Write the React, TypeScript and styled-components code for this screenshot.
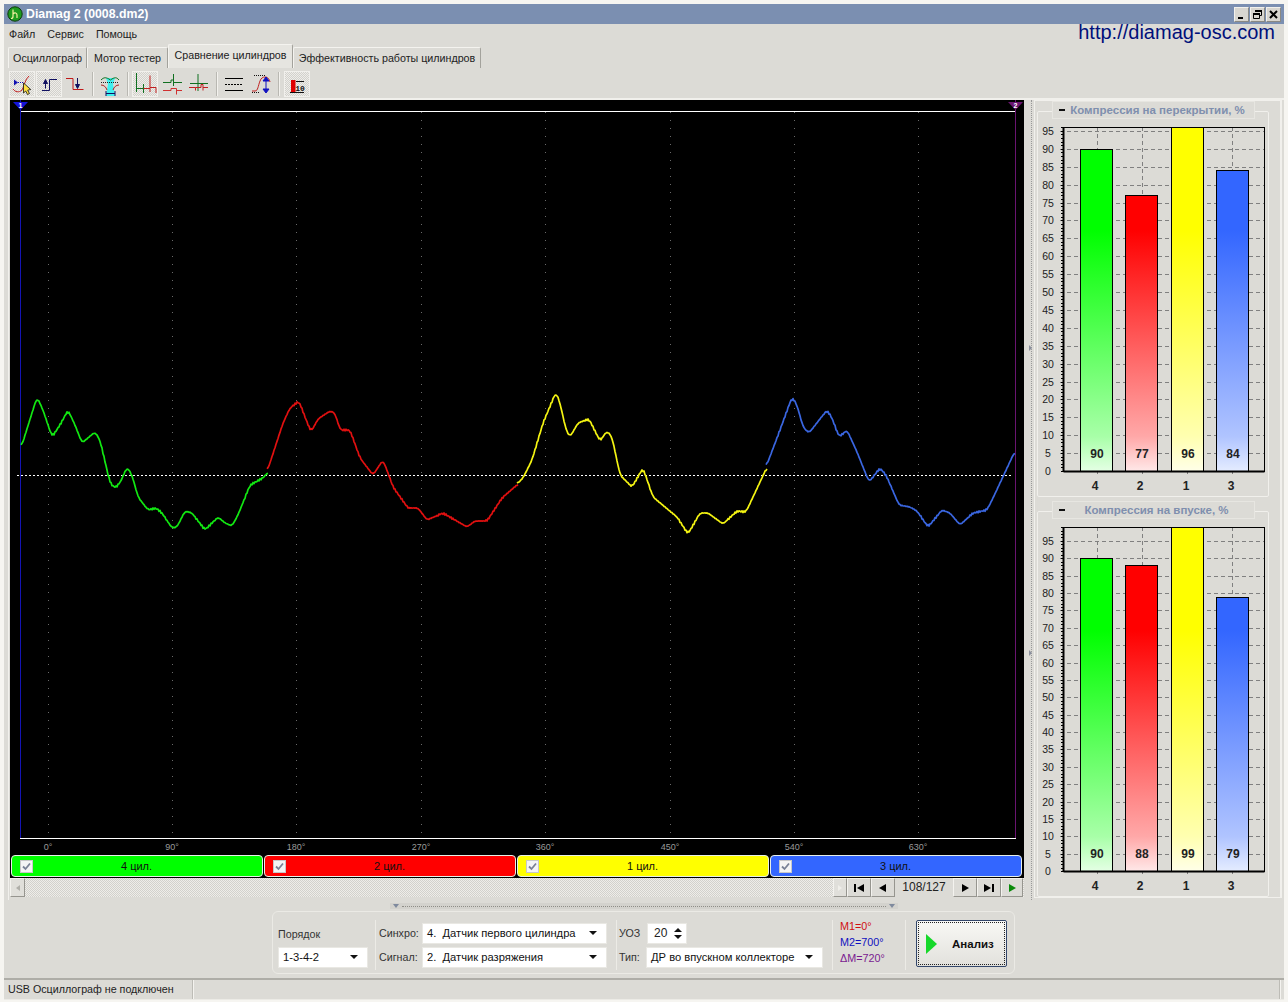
import React from "react";
import styled, { createGlobalStyle } from "styled-components";

const UI = `"Liberation Sans", Arial, sans-serif`;
const BG = "#dcdbd6";
const HATCH = `conic-gradient(#eeede9 25%, #d2d1cc 0 50%, #eeede9 0 75%, #d2d1cc 0)`;

const Global = createGlobalStyle`
  html, body { margin: 0; padding: 0; background: #f6f5f1; }
  * { box-sizing: border-box; }
`;

const Page = styled.div`
  width: 1288px; height: 1002px; padding: 4px 4px 2px 4px; overflow: hidden;
  font: 11px/13px ${UI}; color: #222;
`;
const Win = styled.div`
  height: 996px; background: ${BG}; display: flex; flex-direction: column;
`;
const TitleBar = styled.div`
  height: 20px; flex: none; background: #7b8fb1; display: flex; align-items: center; padding: 0 3px 0 3px;
  color: #fff; font: bold 12.3px ${UI};
`;
const TitleText = styled.span` flex: 1; margin-left: 3px; `;
const WinBtn = styled.span`
  width: 15px; height: 15px; margin-left: 1px; background: #d8d6d0; display: flex; align-items: center; justify-content: center;
  border: 1px solid; border-color: #f2f1ec #8a8983 #8a8983 #f2f1ec;
`;
const MenuBar = styled.div`
  height: 20px; flex: none; display: flex; align-items: center; padding: 0 9px 0 5px; gap: 12px; font-size: 10.7px;
`;
const Url = styled.span`
  margin-left: auto; color: #00107a; font: 20px/20px ${UI}; position: relative; top: -2px;
`;
const TabStrip = styled.div`
  height: 24px; flex: none; display: flex; align-items: flex-end; padding-left: 4px;
`;
const Tab = styled.div<{ $w: number; $on?: boolean }>`
  width: ${(p) => p.$w}px; height: ${(p) => (p.$on ? 24 : 21)}px; padding-bottom: ${(p) => (p.$on ? 3 : 0)}px;
  display: flex; align-items: center; justify-content: center; font-size: 10.7px; white-space: nowrap;
  background: ${(p) => (p.$on ? "#e6e5e0" : BG)};
  border: 1px solid #f4f3ef; border-right-color: #a3a29c; border-bottom: 0; border-radius: 2px 2px 0 0;
`;
const ToolBar = styled.div`
  height: 30px; flex: none; display: flex; align-items: center; padding: 1px 0 0 5px; gap: 0.5px;
`;
const ToolBtn = styled.div<{ $on?: boolean }>`
  width: 26px; height: 26px; flex: none; display: flex; align-items: center; justify-content: center;
  ${(p) => p.$on && `background-image: ${HATCH}; background-size: 2px 2px; border: 1px solid #f1f0ec;`}
`;
const ToolSep = styled.div<{ $m: number }>`
  width: 1px; height: 24px; background: #b9b8b2; margin: 0 ${(p) => p.$m}px; flex: none; box-shadow: 1px 0 #f3f2ee;
`;
const Main = styled.div`
  height: 802px; flex: none; margin-left: 4px; display: flex; padding: 0 0 0 1px;
  border-top: 2px solid #f1f0ec; border-left: 1px solid #f1f0ec;
`;
const LeftCol = styled.div` width: 1014px; flex: none; display: flex; flex-direction: column; `;
const Scope = styled.div`
  width: 1014px; height: 778px; background: #000; flex: none; display: flex; flex-direction: column;
`;
const ScopeSvg = styled.svg` width: 1014px; height: 755px; display: block; flex: none; `;
const Channels = styled.div` display: flex; gap: 1px; height: 22px; padding-left: 1px; `;
const Channel = styled.div<{ $c: string; $w: number }>`
  width: ${(p) => p.$w}px; height: 22px; background: ${(p) => p.$c}; border: 1px solid #e8f0e8; border-radius: 4px;
  display: flex; align-items: center; padding-left: 8px; color: #111; font-size: 11px;
`;
const Check = styled.span`
  width: 13px; height: 13px; background: #f4f4f4; border: 1px solid #c8c8c8; display: flex; align-items: center; justify-content: center; flex: none;
`;
const ChanText = styled.span` flex: 1; text-align: center; padding-right: 22px; `;
const ScrollRow = styled.div`
  height: 19px; display: flex; align-items: stretch; background-image: ${HATCH}; background-size: 2px 2px; padding-right: 1px;
`;
const NavBtn = styled.div<{ $w: number; $off?: boolean }>`
  width: ${(p) => p.$w}px; flex: none; background: ${(p) => (p.$off ? "#e0dfda" : BG)}; display: flex; align-items: center; justify-content: center;
  border: 1px solid; border-color: #f4f3ef #96958f #96958f #f4f3ef;
`;
const NavGap = styled.div` flex: 1; `;
const Counter = styled.div`
  width: 58px; flex: none; background: ${BG}; display: flex; align-items: center; justify-content: center; font-size: 12px; color: #222;
`;
const Splitter = styled.div`
  width: 10px; flex: none; position: relative;
  &::after { content: ""; position: absolute; left: 7px; top: 0; bottom: 0; border-left: 1px dotted #999; }
`;
const SplitMark = styled.span<{ $top: number }>`
  position: absolute; left: 5px; top: ${(p) => p.$top}px; z-index: 1; width: 0; height: 0;
  border: 3px solid transparent; border-left: 3px solid #8a8f9c; border-right: 0;
`;
const RightCol = styled.div`
  width: 248px; flex: none; height: 798px; border: 1px solid #f1f0ec; padding: 10px 10px 0 2px; display: flex; flex-direction: column; gap: 14px;
  border-right: 2px solid #f1f0ec;
`;
const Group = styled.div`
  position: relative; width: 232px; height: 386px; flex: none; border: 1px solid #f1f0ec; border-radius: 2px;
`;
const Legend = styled.div`
  position: absolute; left: 14px; top: -11px; width: 203px; height: 18px; background: ${BG}; border: 1px solid #e7e6e1; z-index: 1;
  display: flex; align-items: center; font: bold 11.5px ${UI}; color: #7f8fae; padding-left: 6px;
`;
const Dash = styled.span` width: 6px; height: 2px; background: #111; flex: none; `;
const LegendText = styled.span<{ $center?: boolean }>`
  flex: 1; text-align: center; padding-right: ${(p) => (p.$center ? 6 : 4)}px;
`;
const ChartSvg = styled.svg` display: block; position: absolute; left: 0; top: 0; `;
const Bottom = styled.div` flex: 1; display: flex; flex-direction: column; `;
const HSplit = styled.div`
  margin: 3px 0 0 386px; width: 508px; height: 6px; flex: none; background: #d3d2cd; display: flex; align-items: center; justify-content: space-between; padding: 0 3px;
`;
const Dots = styled.span` flex: 1; border-top: 1px dotted #8f8e88; margin: 0 3px; `;
const Tri = styled.span`
  width: 0; height: 0; border: 3px solid transparent; border-top: 4px solid #7f8a9e; border-bottom: 0;
`;
const Controls = styled.div`
  margin: 2px 0 0 268px; width: 743px; height: 63px; flex: none; border: 1px solid #ebeae5; border-radius: 6px; display: flex; padding: 8px 0 3px 5px;
  align-items: stretch;
`;
const Sect = styled.div<{ $w: number }>`
  width: ${(p) => p.$w}px; flex: none; display: grid; grid-template-rows: 22px 22px; row-gap: 2px; align-content: center;
  position: relative; align-items: center;
`;
const Div = styled.div<{ $ml: number; $mr: number }>`
  width: 1px; background: #ecebe6; margin: 0 ${(p) => p.$mr}px 0 ${(p) => p.$ml}px; flex: none;
`;
const Row = styled.div` display: flex; align-items: center; `;
const Lab = styled.span<{ $w?: number; $nudge?: number }>`
  ${(p) => (p.$w ? `width: ${p.$w}px;` : "")} flex: none; font-size: 10.7px; color: #333;
  ${(p) => (p.$nudge ? `padding-top: ${p.$nudge}px;` : "")}
`;
const Combo = styled.div<{ $w: number }>`
  width: ${(p) => p.$w}px; height: 21px; background: #fff; border: 1px solid #e9e8e3; display: flex; align-items: center; padding: 0 9px 0 4px;
  font-size: 11.2px; color: #111; justify-content: space-between; white-space: pre;
`;
const Arrow = styled.span`
  width: 0; height: 0; border: 4px solid transparent; border-top: 4px solid #111; border-bottom: 0; flex: none;
`;
const Spin = styled.div`
  width: 40px; height: 21px; background: #fff; border: 1px solid #e9e8e3; display: flex; align-items: center; justify-content: space-between; padding: 0 4px 0 6px; font-size: 12px;
`;
const SpinCol = styled.span` display: flex; flex-direction: column; gap: 3px; `;
const SpinUp = styled.span`
  width: 0; height: 0; border: 4px solid transparent; border-bottom: 4px solid #111; border-top: 0;
`;
const Marks = styled.div`
  display: flex; flex-direction: column; justify-content: center; gap: 3px; width: 60px; flex: none; font-size: 10.8px; padding-bottom: 6px;
`;
const Mark = styled.span<{ $c: string }>` color: ${(p) => p.$c}; `;
const AnalyzeBtn = styled.div`
  width: 91px; height: 47px; margin: 0 0 0 10px; flex: none; border: 1px solid #33476b; border-radius: 2px;
  outline: 1px dotted #222; outline-offset: -3px; background: linear-gradient(#f8f8f5, #e2e1dc);
  display: flex; align-items: center; padding-left: 9px; gap: 15px; font: bold 11.5px ${UI}; color: #111;
`;
const Status = styled.div`
  height: 22px; flex: none; margin-top: auto; border-top: 2px solid #aeada7; display: flex; align-items: stretch; border-bottom: 1px solid #ecebe6;
`;
const StatusCell = styled.div<{ $w?: number }>`
  ${(p) => (p.$w ? `width: ${p.$w}px;` : "flex: 1;")} margin-right: 3px; display: flex; align-items: center; padding-left: 4px; font-size: 10.7px;
  border-right: 1px solid #f4f3ef; box-shadow: inset -1px 0 #bdbcb6;
`;

/* ---------- trace ---------- */
type P = [number, number];
const green: P[] = [[21,448],[37,397],[43,410],[52,437],[60,425],[68,410],[75,425],[82,443],[95,432],[100,440],[110,483],[115,488],[120,483],[127,467],[132,475],[138,497],[148,510],[156,508],[162,513],[172,528],[177,527],[185,511],[192,513],[205,530],[218,517],[225,523],[232,526],[238,515],[250,485],[263,478],[268,472]];
const red: P[] = [[267,472],[283,423],[290,408],[299,401],[305,417],[311,432],[318,419],[330,411],[335,413],[340,430],[350,430],[360,458],[373,475],[383,460],[388,473],[393,487],[408,508],[418,508],[427,520],[443,513],[467,527],[475,521],[487,521],[502,498],[518,484]];
const yellow: P[] = [[517,484],[523,478],[532,460],[543,423],[556,392],[560,403],[566,430],[570,437],[578,423],[589,419],[600,441],[607,431],[612,437],[620,475],[632,487],[643,468],[653,497],[677,517],[688,534],[700,513],[708,513],[723,524],[737,511],[746,512],[767,467]];
const blue: P[] = [[766,467],[780,430],[792,397],[797,405],[803,427],[809,433],[827,410],[832,418],[839,437],[847,430],[857,452],[869,482],[880,468],[886,475],[899,505],[910,507],[917,511],[928,527],[942,510],[950,513],[960,525],[973,513],[987,510],[993,498],[1015,451]];

function tracePath(pts: P[]): string {
  const ys: number[] = [];
  const x0 = pts[0][0], x1 = pts[pts.length - 1][0];
  let k = 0;
  for (let x = x0; x <= x1; x++) {
    while (k < pts.length - 2 && x > pts[k + 1][0]) k++;
    const [ax, ay] = pts[k], [bx, by] = pts[k + 1];
    ys.push(ay + ((by - ay) * (x - ax)) / (bx - ax));
  }
  const out: string[] = [];
  ys.forEach((_, i) => {
    let s = 0, n = 0;
    for (let j = Math.max(0, i - 2); j <= Math.min(ys.length - 1, i + 2); j++) { s += ys[j]; n++; }
    const jitter = Math.sin((x0 + i) * 2.7) * (Math.sin((x0 + i) * 0.13) > 0.3 ? 0.9 : 0.25);
    out.push(`${x0 + i},${(s / n + jitter).toFixed(1)}`);
  });
  return "M" + out.join("L");
}

const GRID = [48, 172, 296, 421, 545, 670, 794, 918];
const DEG = ["0°", "90°", "180°", "270°", "360°", "450°", "540°", "630°"];

function ScopePlot() {
  return (
    <ScopeSvg viewBox="10 100 1014 755">
      {GRID.map((x, i) => (
        <g key={x}>
          <line x1={x + 0.5} y1={112} x2={x + 0.5} y2={838} stroke="#6a6a6a" strokeDasharray="1 7" />
          <text x={x} y={850} fontSize="9" fill="#9a9a9a" textAnchor="middle" fontFamily={UI}>{DEG[i]}</text>
        </g>
      ))}
      <line x1={20} y1={111.5} x2={1016} y2={111.5} stroke="#fff" />
      <line x1={20} y1={838.5} x2={1016} y2={838.5} stroke="#fff" />
      <line x1={20.5} y1={100} x2={20.5} y2={838} stroke="#1414b4" />
      <line x1={1015.5} y1={100} x2={1015.5} y2={838} stroke="#6a1470" />
      <line x1={17} y1={475.5} x2={1013} y2={475.5} stroke="#fff" strokeDasharray="2 2" />
      <polygon points="13,102 28,102 20.500,110" fill="#1414d8" />
      <polygon points="1008,102 1023,102 1015.500,110" fill="#6a1470" />
      <text x={20.5} y={108} fontSize="7" fontWeight="bold" fill="#fff" textAnchor="middle" fontFamily={UI}>1</text>
      <text x={1015.5} y={108} fontSize="7" fontWeight="bold" fill="#fff" textAnchor="middle" fontFamily={UI}>2</text>
      <g fill="none" strokeWidth="1.7" strokeLinejoin="round">
        <path d={tracePath(green)} stroke="#12e812" />
        <path d={tracePath(red)} stroke="#e01010" />
        <path d={tracePath(yellow)} stroke="#f4f412" />
        <path d={tracePath(blue)} stroke="#3a66e0" />
      </g>
    </ScopeSvg>
  );
}

const BAR_X = [1080, 1125, 1171, 1216];
const BAR_IDS = ["g", "r", "y", "b"];
const NAMES = ["4", "2", "1", "3"];
const COLORS = ["#00ff00", "#ff0000", "#ffff00", "#3366ff"];
const PALE = ["#a8ffa8", "#ffa8a8", "#ffffb0", "#b0c4ff"];
const PALER = ["#e4ffe4", "#ffe8e8", "#ffffe8", "#e4ecff"];

function BarChart(props: { y0: number; top: number; unit: number; gTop: number; vals: number[]; id: string }) {
  const { y0, top, unit, gTop, vals, id } = props;
  const ticks: number[] = [];
  for (let v = 0; v <= 95; v += 5) ticks.push(v);
  const minor: number[] = [];
  for (let v = 0; v <= (y0 - top) / unit; v += 1) minor.push(v);
  return (
    <ChartSvg width={230} height={384} viewBox={`1038 ${gTop} 230 384`}>
      <defs>
        {COLORS.map((c, i) => (
          <linearGradient key={c} id={`${id}${BAR_IDS[i]}`} x1="0" y1={top} x2="0" y2={y0} gradientUnits="userSpaceOnUse">
            <stop offset="0.3" stopColor={c} />
            <stop offset="0.9" stopColor={PALE[i]} />
            <stop offset="1" stopColor={PALER[i]} />
          </linearGradient>
        ))}
      </defs>
      {ticks.slice(1).map((v) => (
        <line key={v} x1={1060} x2={1265} y1={Math.round(y0 - v * unit) + 0.5} y2={Math.round(y0 - v * unit) + 0.5} stroke="#808080" strokeDasharray="4 3" />
      ))}
      {[1097, 1142, 1187, 1232].map((x) => (
        <line key={x} x1={x + 0.5} x2={x + 0.5} y1={top} y2={y0 + 4} stroke="#808080" strokeDasharray="4 3" />
      ))}
      {vals.map((v, i) => {
        const y = Math.max(top, Math.round(y0 - v * unit));
        return <rect key={i} x={BAR_X[i] + 0.5} y={y + 0.5} width={32} height={y0 - y} fill={`url(#${id}${BAR_IDS[i]})`} stroke="#000" />;
      })}
      <rect x={1063.5} y={top + 0.5} width={201} height={y0 - top} fill="none" stroke="#000" strokeWidth="1" />
      <line x1={1063.5} x2={1264.5} y1={y0 + 0.5} y2={y0 + 0.5} stroke="#000" strokeWidth="2" />
      <line x1={1063.5} x2={1063.5} y1={top} y2={y0} stroke="#000" strokeWidth="2" />
      {minor.map((v) => (
        <line key={v} x1={1061} x2={1063} y1={Math.round(y0 - v * unit) + 0.5} y2={Math.round(y0 - v * unit) + 0.5} stroke="#000" />
      ))}
      {ticks.map((v) => (
        <text key={v} x={1048} y={Math.round(y0 - v * unit) + 4} fontSize="10.5" fill="#222" textAnchor="middle" fontFamily={UI}>{v}</text>
      ))}
      {vals.map((v, i) => (
        <g key={i}>
          <text x={BAR_X[i] + 17} y={y0 - 13} fontSize="12" fontWeight="bold" fill="#222" textAnchor="middle" fontFamily={UI}>{v}</text>
          <text x={BAR_X[i] + 15} y={y0 + 19} fontSize="12" fontWeight="bold" fill="#222" textAnchor="middle" fontFamily={UI}>{NAMES[i]}</text>
        </g>
      ))}
    </ChartSvg>
  );
}

/* ---------- icons (each drawn in a 24x24 box) ---------- */
const Ico = ({ children }: { children: React.ReactNode }) => (
  <svg width="24" height="24" viewBox="0 0 24 24" fill="none" style={{ display: "block" }}>{children}</svg>
);
const IcoCursor = () => (
  <Ico>
    <path d="M3 17c2 3 6 4 9 1 2-3 3-11 7-14" stroke="#c02020" />
    <path d="M4 7.500l4 3-4 3z" fill="#1010b0" />
    <path d="M8 10.500h5" stroke="#1010b0" strokeDasharray="1 1" />
    <path d="M13.500 11v10l2.200-2 1.800 3.500 2-1-1.800-3.300 3-.7z" fill="#ffe040" stroke="#111" strokeWidth="0.8" />
  </Ico>
);
const IcoRise = () => (
  <Ico>
    <path d="M5 18.500h7.500V7.500H20" stroke="#101060" />
    <path d="M8.500 16.500V10M6.500 11.500l2-4 2 4z" stroke="#101060" fill="#101060" />
  </Ico>
);
const IcoFall = () => (
  <Ico>
    <path d="M3 6.500h7v11h10.500" stroke="#c01818" />
    <path d="M14.500 6v7M12.500 12.500l2 4 2-4z" stroke="#101060" fill="#101060" />
  </Ico>
);
const IcoCyan = () => (
  <Ico>
    <path d="M8 6h9l-2 6 2 12H8l2-12z" fill="#40f0f0" />
    <path d="M3 8c3-3 5-3 9.500 0 4-3 6-3 8.500 0" stroke="#107020" />
    <path d="M3 13c3 0 5 2 6 5M21 13c-3 0-5 2-6 5" stroke="#b02020" />
    <path d="M3 10.500h18" stroke="#222" strokeDasharray="1 1" />
    <path d="M8 21.500h9M8 19v5M17 19v5" stroke="#101060" />
  </Ico>
);
const IcoWave1 = () => (
  <Ico>
    <path d="M3.500 1v19M3.500 16.500h7M10.500 12v9" stroke="#107020" />
    <path d="M10.500 16.500h6.500M17 3.500V20M17 15.500h6v5.500" stroke="#c02020" />
  </Ico>
);
const IcoWave2 = () => (
  <Ico>
    <path d="M3 10.500h8M11 10.500V8h2.500V2M13.500 2v12M13.500 10.500H22" stroke="#107020" />
    <path d="M3 18.500h8v-2h5.500v6M16.500 18.500H22" stroke="#d03030" />
  </Ico>
);
const IcoWave3 = () => (
  <Ico>
    <path d="M4 11.500h8M12 2v17M12 11.500h10" stroke="#107020" />
    <path d="M3 15.500h6.500v3M9.500 15.500H15v-3h2v6M17 15.500h5" stroke="#c02020" />
  </Ico>
);
const IcoLines = () => (
  <Ico>
    <path d="M3 6.500h18M3 18.500h18" stroke="#000" />
    <path d="M3 12.500h18" stroke="#000" strokeDasharray="2 1" />
  </Ico>
);
const IcoAmp = () => (
  <Ico>
    <path d="M3 19h3c3 0 3-5 5-10 1-3 3-4 5-4 2 0 4 1 5 5" stroke="#c02020" />
    <path d="M5 3.500h11M3 20.500h8" stroke="#111" strokeDasharray="1 1" />
    <path d="M17 5l-3 4h6zM17 21l-3-4h6zM17 8v10" fill="#1010c0" stroke="#1010c0" />
  </Ico>
);
const IcoBar = () => (
  <svg width="24" height="24" viewBox="0 0 24 24" style={{ display: "block" }}>
    <rect x="6" y="8" width="4.500" height="12" fill="#e00000" />
    <path d="M5 20.500h14M11 9.500h8" stroke="#111" />
    <text x="15" y="18.500" fontSize="8" fontWeight="bold" fontFamily={`"Liberation Mono", monospace`} textAnchor="middle" fill="#111">10</text>
  </svg>
);

const Tb = ({ on, children }: { on?: boolean; children: React.ReactNode }) => (
  <ToolBtn $on={on}>{children}</ToolBtn>
);

const NavIcon = ({ d, c = "#000" }: { d: string; c?: string }) => (
  <svg width="12" height="10" viewBox="0 0 12 10"><path d={d} fill={c} /></svg>
);

const CHANNELS = [
  { c: "#00ff00", w: 252, t: "4 цил." },
  { c: "#ff0000", w: 252, t: "2 цил." },
  { c: "#ffff00", w: 252, t: "1 цил." },
  { c: "#3366ff", w: 252, t: "3 цил." },
];

export default function App() {
  return (
    <Page>
      <Global />
      <Win>
        <TitleBar>
          <svg width="16" height="16" viewBox="0 0 16 16">
            <circle cx="8" cy="8" r="7.2" fill="#1f9a1f" stroke="#0c3a0c" />
            <path d="M6 3.500v7c0 1.500-1 2-2 2M6 8c2-2 4-1 4 1v3" stroke="#f4f0a0" strokeWidth="1.2" fill="none" />
          </svg>
          <TitleText>Diamag 2 (0008.dm2)</TitleText>
          <WinBtn><svg width="9" height="9" viewBox="0 0 9 9"><path d="M1 7h5v2H1z" fill="#000" /></svg></WinBtn>
          <WinBtn><svg width="11" height="11" viewBox="0 0 11 11"><path d="M3.500 1.500h6v5h-2M1.500 4.500h6v5h-6z" stroke="#000" fill="none" /><path d="M3 1h7v2H3zM1 4h7v2H1z" fill="#000" /></svg></WinBtn>
          <WinBtn><svg width="9" height="9" viewBox="0 0 9 9"><path d="M1 1l7 7M8 1l-7 7" stroke="#000" strokeWidth="2" /></svg></WinBtn>
        </TitleBar>
        <MenuBar>
          <span>Файл</span><span>Сервис</span><span>Помощь</span>
          <Url>http://diamag-osc.com</Url>
        </MenuBar>
        <TabStrip>
          <Tab $w={79}>Осциллограф</Tab>
          <Tab $w={81}>Мотор тестер</Tab>
          <Tab $w={125} $on>Сравнение цилиндров</Tab>
          <Tab $w={188}>Эффективность работы цилиндров</Tab>
        </TabStrip>
        <ToolBar>
          <Tb on><IcoCursor /></Tb>
          <Tb on><IcoRise /></Tb>
          <Tb><IcoFall /></Tb>
          <ToolSep $m={3.5} />
          <Tb><IcoCyan /></Tb>
          <ToolSep $m={3.5} />
          <Tb on><IcoWave1 /></Tb>
          <Tb><IcoWave2 /></Tb>
          <Tb><IcoWave3 /></Tb>
          <ToolSep $m={4} />
          <Tb><IcoLines /></Tb>
          <Tb><IcoAmp /></Tb>
          <ToolSep $m={4} />
          <Tb on><IcoBar /></Tb>
        </ToolBar>
        <Main>
          <LeftCol>
            <Scope>
              <ScopePlot />
              <Channels>
                {CHANNELS.map((ch) => (
                  <Channel key={ch.t} $c={ch.c} $w={ch.w}>
                    <Check>
                      <svg width="9" height="9" viewBox="0 0 9 9"><path d="M1 4.500l2.500 2.500L8 1.500" stroke="#7a8296" strokeWidth="1.800" fill="none" /></svg>
                    </Check>
                    <ChanText>{ch.t}</ChanText>
                  </Channel>
                ))}
              </Channels>
            </Scope>
            <ScrollRow>
              <NavBtn $w={15} $off><NavIcon d="M8 2v6L4 5z" c="#b0afa9" /></NavBtn>
              <NavGap />
              <NavBtn $w={14} $off><NavIcon d="M4 2v6l4-3z" c="#f0efea" /></NavBtn>
              <NavBtn $w={24}><NavIcon d="M1 1h2v8H1zM11 1v8L4 5z" /></NavBtn>
              <NavBtn $w={24}><NavIcon d="M9 1v8L2 5z" /></NavBtn>
              <Counter>108/127</Counter>
              <NavBtn $w={24}><NavIcon d="M3 1v8l7-4z" /></NavBtn>
              <NavBtn $w={24}><NavIcon d="M1 1v8l7-4zM9 1h2v8H9z" /></NavBtn>
              <NavBtn $w={22}><NavIcon d="M3 1v8l7-4z" c="#0a8a0a" /></NavBtn>
            </ScrollRow>
          </LeftCol>
          <Splitter>
            <SplitMark $top={245} />
            <SplitMark $top={550} />
          </Splitter>
          <RightCol>
            <Group>
              <Legend><Dash /><LegendText>Компрессия на перекрытии, %</LegendText></Legend>
              <BarChart y0={471} top={127} unit={3.58} gTop={112} vals={[90, 77, 96, 84]} id="a" />
            </Group>
            <Group>
              <Legend><Dash /><LegendText $center>Компрессия на впуске, %</LegendText></Legend>
              <BarChart y0={871} top={527} unit={3.474} gTop={512} vals={[90, 88, 99, 79]} id="b" />
            </Group>
          </RightCol>
        </Main>
        <Bottom>
          <HSplit><Tri /><Dots /><Tri /></HSplit>
          <Controls>
            <Sect $w={90}>
              <Lab $nudge={2}>Порядок</Lab>
              <Combo $w={90}>1-3-4-2<Arrow /></Combo>
            </Sect>
            <Div $ml={7} $mr={3} />
            <Sect $w={228}>
              <Row><Lab $w={43}>Синхро:</Lab><Combo $w={185}>{"4.  Датчик первого цилиндра"}<Arrow /></Combo></Row>
              <Row><Lab $w={43}>Сигнал:</Lab><Combo $w={185}>{"2.  Датчик разряжения"}<Arrow /></Combo></Row>
            </Sect>
            <Div $ml={9} $mr={2} />
            <Sect $w={205}>
              <Row><Lab $w={28}>УОЗ</Lab><Spin>20<SpinCol><SpinUp /><Arrow /></SpinCol></Spin></Row>
              <Row><Lab $w={27}>Тип:</Lab><Combo $w={177}>ДР во впускном коллекторе<Arrow /></Combo></Row>
            </Sect>
            <Div $ml={8} $mr={7} />
            <Marks>
              <Mark $c="#d01010">M1=0°</Mark>
              <Mark $c="#1010c0">M2=700°</Mark>
              <Mark $c="#7a1a90">ΔM=720°</Mark>
            </Marks>
            <Div $ml={5} $mr={0} />
            <AnalyzeBtn>
              <svg width="11" height="20" viewBox="0 0 11 20"><path d="M0 0l11 10L0 20z" fill="#16d82a" /></svg>
              Анализ
            </AnalyzeBtn>
          </Controls>
          <Status>
            <StatusCell $w={190}>USB Осциллограф не подключен</StatusCell>
            <StatusCell />
          </Status>
        </Bottom>
      </Win>
    </Page>
  );
}
